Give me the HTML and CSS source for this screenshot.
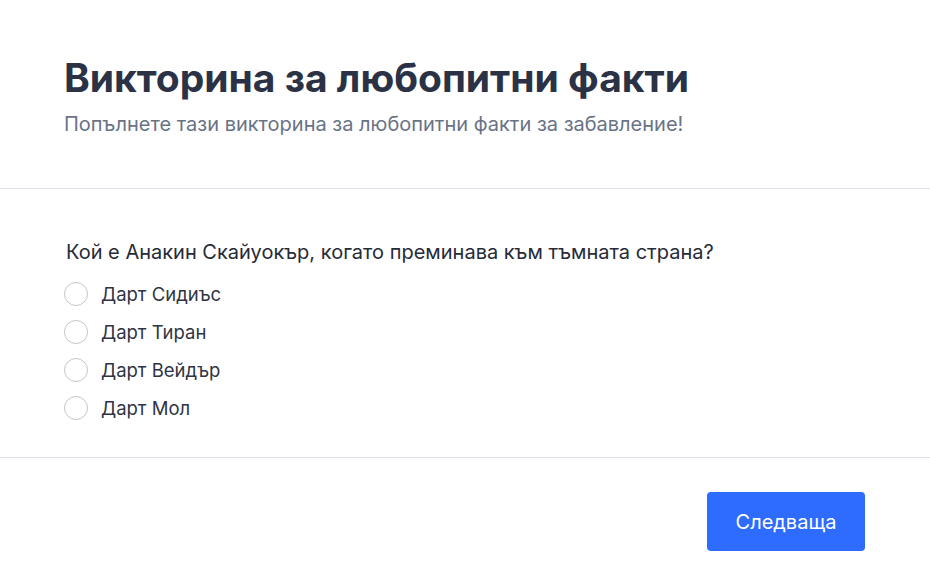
FILE: index.html
```html
<!DOCTYPE html>
<html lang="bg">
<head>
	<meta charset="utf-8">
	<title>Викторина</title>
	<link rel="stylesheet" href="styles.css">
</head>
<body>

<div class="card">
	<div class="card-header">
		<h1>Викторина за любопитни факти</h1>
		<p>Попълнете тази викторина за любопитни факти за забавление!</p>
	</div>

	<form class="card-body">
		<div class="question">Кой е Анакин Скайуокър, когато преминава към тъмната страна?</div>
		<label class="option"><input type="radio" name="answer"><span>Дарт Сидиъс</span></label>
		<label class="option"><input type="radio" name="answer"><span>Дарт Тиран</span></label>
		<label class="option"><input type="radio" name="answer"><span>Дарт Вейдър</span></label>
		<label class="option"><input type="radio" name="answer"><span>Дарт Мол</span></label>
	</form>

	<div class="card-footer">
		<button type="button" class="btn">Следваща</button>
	</div>
</div>

</body>
</html>
```

FILE: styles.css
```css
body {
	margin: 0;
	background: #fff;
	font-family: Inter, "Noto Sans", sans-serif;
	color: #2d3344;
}

.card {
	background: #fff;
	border-top-right-radius: 8px;
}

.card-header {
	padding: 54px 64px 50px;
	border-bottom: 1px solid #dfe0ea;
}

.card-header h1 {
	margin: 0;
	font-size: 39px;
	line-height: 48px;
	font-weight: 700;
	color: #2b3245;
}

.card-header p {
	margin: 8px 0 0;
	font-size: 20px;
	line-height: 28px;
	color: #697386;
}

.card-body {
	padding: 49px 64px 37px;
	display: flex;
	flex-direction: column;
	gap: 14px;
}

.question {
	margin: 0 0 2px 2px;
	font-size: 20px;
	line-height: 28px;
	color: #262b38;
}

.option {
	display: flex;
	align-items: center;
	gap: 13px;
	font-size: 18.5px;
	line-height: 24px;
	color: #2f3442;
}

.option input {
	appearance: none;
	margin: 0;
	width: 24px;
	height: 24px;
	border: 1.5px solid #c2c5cd;
	border-radius: 50%;
	background: #fff;
}

.card-footer {
	border-top: 1px solid #dfe0ea;
	padding: 34px 65px 34px;
	display: flex;
	justify-content: flex-end;
}

.btn {
	width: 158px;
	height: 59px;
	border: 0;
	border-radius: 4px;
	background: #2e6bff;
	color: #fff;
	font-family: Inter, "Noto Sans", sans-serif;
	font-size: 20px;
}
```
